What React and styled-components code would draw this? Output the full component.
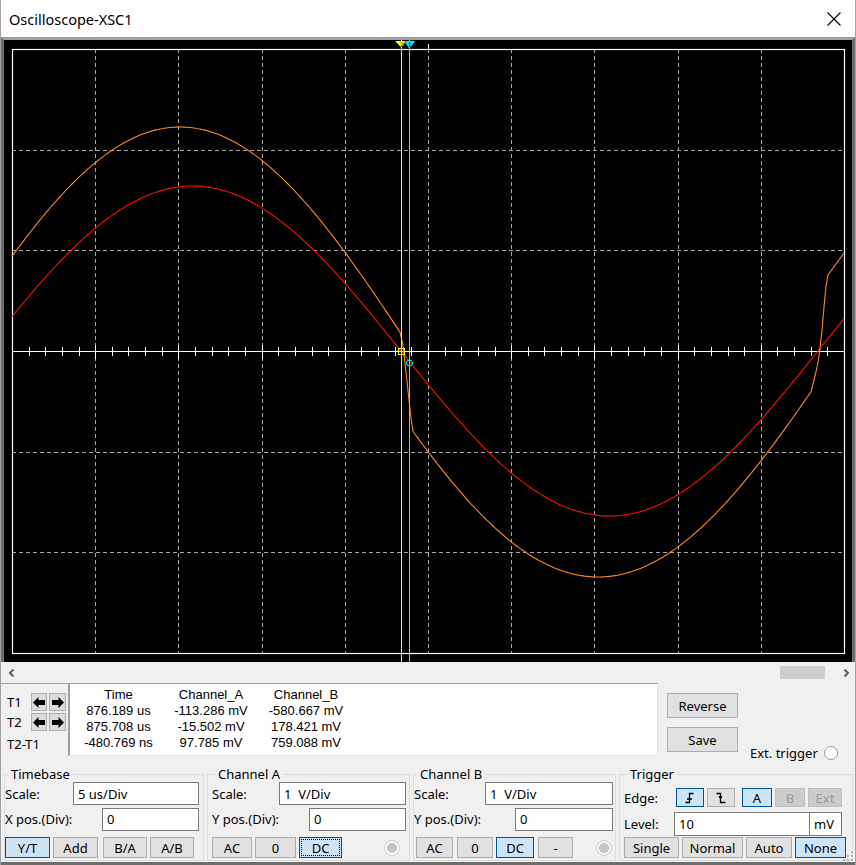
import React from "react";
import styled, { createGlobalStyle } from "styled-components";

const GlobalStyle = createGlobalStyle`
  html, body {
    margin: 0;
    padding: 0;
    background: #f0f0f0;
  }
  body {
    font-family: "Noto Sans", "Segoe UI", sans-serif;
    font-size: 13px;
    color: #000;
  }
`;

const Window = styled.div`
  width: 856px;
  height: 865px;
  box-sizing: border-box;
  background: #f0f0f0;
  border-left: 1px solid #a0a0a0;
  border-right: 1px solid #a0a0a0;
  display: flex;
  flex-direction: column;
  position: relative;
  overflow: hidden;
`;

const TitleBar = styled.div`
  height: 37px;
  flex: none;
  background: #ffffff;
  display: flex;
  align-items: center;
  justify-content: space-between;
  padding: 0 14px 0 8px;
  font-size: 14.5px;
  color: #000;
`;

const ScopeFrame = styled.div`
  flex: none;
  height: 622px;
  background: #000;
  border-top: 3px solid #a0a0a0;
  border-left: 3px solid #6d6d6d;
  border-right: 3px solid #6d6d6d;

  svg {
    display: block;
  }
`;

const ScrollRow = styled.div`
  flex: none;
  height: 21px;
  display: flex;
  align-items: center;
  padding: 0 4px 0 6px;
`;

const Thumb = styled.div`
  width: 45px;
  height: 13px;
  background: #cdcdcd;
  margin-left: auto;
  margin-right: 16px;
`;

const MidRow = styled.div`
  flex: none;
  height: 77px;
  display: flex;
  align-items: flex-start;
`;

const CursorPanel = styled.div`
  width: 67px;
  height: 75px;
  box-sizing: border-box;
  border-top: 1px solid #a0a0a0;
  padding-top: 9px;
  display: flex;
  flex-direction: column;
`;

const CursorRow = styled.div`
  display: flex;
  align-items: center;
  height: 18px;
  margin-top: ${({ $mt }) => $mt || 0}px;
  padding-left: 6px;
`;

const CursorLabel = styled.span`
  width: 24px;
  line-height: 16px;
`;

const ArrowButton = styled.div`
  width: 15px;
  height: 16px;
  margin-right: 2px;
  background: #dcdcdc;
  border: 1px solid #adadad;
  display: flex;
  align-items: center;
  justify-content: center;
`;

const DeltaLabel = styled.div`
  margin-top: 5px;
  padding-left: 6px;
  line-height: 16px;
`;

const Readout = styled.div`
  width: 590px;
  height: 73px;
  box-sizing: border-box;
  background: #ffffff;
  border-top: 1px solid #a0a0a0;
  border-left: 2px solid #a0a0a0;
  border-right: 1px solid #e3e3e3;
  border-bottom: 1px solid #e3e3e3;
  padding-top: 3px;
  display: grid;
  grid-template-columns: 97px 88px 102px;
  grid-auto-rows: 16px;
  font-family: "Liberation Sans", Arial, sans-serif;
  font-size: 13px;
  line-height: 16px;
  text-align: center;
  white-space: nowrap;
`;

const SideArea = styled.div`
  display: flex;
  align-items: flex-start;
  padding: 10px 0 0 9px;
`;

const ButtonColumn = styled.div`
  display: flex;
  flex-direction: column;
  gap: 9px;
`;

const ExtTrigger = styled.div`
  display: flex;
  align-items: center;
  gap: 6px;
  margin: 52px 0 0 12px;
  line-height: 16px;
`;

const RadioCircle = styled.span`
  width: 14px;
  height: 14px;
  box-sizing: border-box;
  border-radius: 50%;
  border: 1px solid #9a9a9a;
  background: #ffffff;
`;

const LedCircle = styled.span`
  width: 16px;
  height: 16px;
  box-sizing: border-box;
  border-radius: 50%;
  border: 1px solid #d0d0d0;
  background: #f7f7f7;
  display: flex;
  align-items: center;
  justify-content: center;
  margin-left: auto;
  margin-right: ${({ $mr }) => $mr || 0}px;

  &::after {
    content: "";
    width: 10px;
    height: 10px;
    border-radius: 50%;
    background: #c6c6c6;
  }
`;

const BottomRow = styled.div`
  flex: none;
  height: 105px;
  box-sizing: border-box;
  border-bottom: 3px solid #6d6d6d;
  padding: 7px 0 0 3px;
  display: flex;
  gap: 3px;
`;

const Group = styled.fieldset`
  width: ${({ $w }) => $w}px;
  height: 94px;
  box-sizing: border-box;
  margin: 0;
  padding: 0 ${({ $pr }) => $pr || 0}px 0 ${({ $pl }) => $pl || 0}px;
  min-width: 0;
  border: 1px solid #dcdcdc;
  display: flex;
  flex-direction: column;
`;

const Legend = styled.legend`
  padding: 0 3px;
  margin-left: 3px;
  line-height: 14px;
  font-size: 13px;
`;

const FieldRow = styled.div`
  display: flex;
  align-items: center;
  height: ${({ $h }) => $h}px;
  margin-top: ${({ $mt }) => $mt || 0}px;
  padding-left: ${({ $pl }) => $pl || 0}px;
  flex: none;
`;

const FieldLabel = styled.span`
  width: ${({ $w }) => ($w ? `${$w}px` : "auto")};
  flex: none;
  white-space: nowrap;
`;

const TextBox = styled.div`
  width: ${({ $w }) => $w}px;
  height: ${({ $h }) => $h || 23}px;
  box-sizing: border-box;
  margin-left: ${({ $auto, $ml }) => ($auto ? "auto" : `${$ml || 0}px`)};
  background: #ffffff;
  border: 1px solid #7a7a7a;
  padding-left: 4px;
  display: flex;
  align-items: center;
  white-space: pre;
  flex: none;
`;

const Button = styled.div`
  width: ${({ $w }) => $w}px;
  height: ${({ $h }) => $h || 21}px;
  margin-right: ${({ $mr }) => ($mr === undefined ? 3 : $mr)}px;
  box-sizing: border-box;
  flex: none;
  display: flex;
  align-items: center;
  justify-content: center;
  background: ${({ $active, $off }) =>
    $active ? "#cce4f7" : $off ? "#cccccc" : "#e1e1e1"};
  border: 1px solid
    ${({ $active, $off }) => ($active ? "#005499" : $off ? "#bfbfbf" : "#adadad")};
  color: ${({ $off }) => ($off ? "#9a9a9a" : "#000")};
  outline: ${({ $focus }) => ($focus ? "1px dotted #000" : "none")};
  outline-offset: -3px;
  line-height: 16px;
`;

const Grip = styled.svg`
  position: absolute;
  right: 2px;
  bottom: 4px;
`;

/* ---------- scope screen ---------- */

const PX0 = 12;
const PX1 = 844;
const PY0 = 49;
const PY1 = 653;
const YC = 351;
const DIVX = (PX1 - PX0) / 10;
const DIVY = (PY1 - PY0) / 6;

function toPath(points) {
  return points
    .map((p, i) => `${i ? "L" : "M"}${p[0].toFixed(1)} ${p[1].toFixed(1)}`)
    .join(" ");
}

const redPoints = [];
for (let x = PX0; x <= PX1; x += 2) {
  redPoints.push([x, YC - 165 * Math.sin((Math.PI * (401 - x)) / 417)]);
}

const orangePoints = [];
for (let x = PX0; x <= 401; x += 2) {
  orangePoints.push([x, YC - 224 * Math.cos((2 * Math.PI * (x - 180)) / 930)]);
}
orangePoints.push([403, 345], [405, 363], [407, 381], [409, 400], [411, 418]);
for (let x = 413; x <= 812; x += 2) {
  orangePoints.push([x, YC + 226 * Math.cos((2 * Math.PI * (x - 598)) / 963)]);
}
orangePoints.push(
  [815, 376],
  [818, 363],
  [820, 348],
  [822, 330],
  [824, 307],
  [826, 286],
  [828, 275],
  [836, 264],
  [844, 253]
);

function ScopeScreen() {
  const vLines = [];
  for (let i = 1; i < 10; i++) vLines.push(Math.round(PX0 + i * DIVX) + 0.5);
  const hLines = [1, 2, 4, 5].map((j) => Math.round(PY0 + j * DIVY) + 0.5);
  const ticks = [];
  for (let i = 0; i <= 50; i++) {
    ticks.push({ x: Math.round(PX0 + (i * DIVX) / 5) + 0.5, major: i % 5 === 0 });
  }

  return (
    <svg width="848" height="622" viewBox="4 40 848 622">
      <g stroke="#a8a8a8" strokeWidth="1" strokeDasharray="4 3" shapeRendering="crispEdges">
        {vLines.map((x) => (
          <line key={`v${x}`} x1={x} y1={PY0} x2={x} y2={PY1} />
        ))}
        {hLines.map((y) => (
          <line key={`h${y}`} x1={PX0} y1={y} x2={PX1} y2={y} />
        ))}
      </g>
      <rect x={PX0 + 0.5} y={PY0 + 0.5} width={PX1 - PX0} height={PY1 - PY0} fill="none" stroke="#fff" strokeWidth="1.2" />
      <g stroke="#fff" strokeWidth="1.3" shapeRendering="crispEdges">
        <line x1={PX0} y1={YC + 0.5} x2={PX1} y2={YC + 0.5} />
        {ticks.map((t) => (
          <line key={t.x} x1={t.x} y1={YC - (t.major ? 6 : 4)} x2={t.x} y2={YC + (t.major ? 8 : 5)} />
        ))}
        <line x1="428.5" y1="44" x2="428.5" y2="49" />
      </g>
      <path d={toPath(redPoints)} fill="none" stroke="#ff1000" strokeWidth="1.1" />
      <path d={toPath(orangePoints)} fill="none" stroke="#ff8a1c" strokeWidth="1.1" />
      <line x1="401.5" y1="40" x2="401.5" y2="662" stroke="#ffff00" strokeWidth="1" />
      <line x1="409.5" y1="40" x2="409.5" y2="662" stroke="#00ffff" strokeWidth="1" />
      <polygon points="395,41 406,41 401.5,48" fill="#ffff00" />
      <polygon points="404,41 415,41 409.5,49" fill="#00e5ff" />
      <polygon points="404,41 406,41 405,43" fill="#ff00ff" />
      <text x="400" y="46.5" fontSize="6" fontFamily="DejaVu Sans, sans-serif" fill="#000">2</text>
      <text x="408" y="46.5" fontSize="6" fontFamily="DejaVu Sans, sans-serif" fill="#000">1</text>
      <rect x="398.5" y="348.5" width="6" height="6" fill="none" stroke="#ffff00" />
      <circle cx="409.5" cy="363" r="3" fill="none" stroke="#00ffff" />
    </svg>
  );
}

/* ---------- small drawings ---------- */

const Chevron = ({ dir }) => (
  <svg width="10" height="10" viewBox="0 0 10 10">
    <path
      d={dir === "left" ? "M6.5 1.5 L3 5 L6.5 8.5" : "M3.5 1.5 L7 5 L3.5 8.5"}
      fill="none"
      stroke="#606060"
      strokeWidth="2"
    />
  </svg>
);

const BigArrow = ({ dir }) => (
  <svg width="12" height="11" viewBox="0 0 12 11">
    <polygon
      points={
        dir === "left"
          ? "0,5.5 5.5,0 5.5,3 12,3 12,8 5.5,8 5.5,11"
          : "12,5.5 6.5,0 6.5,3 0,3 0,8 6.5,8 6.5,11"
      }
      fill="#000"
    />
  </svg>
);

const EdgeIcon = ({ falling }) => (
  <svg width="12" height="12" viewBox="0 0 12 12">
    {falling ? (
      <path d="M1.5 1.5 H5.5 V10.5 H10.5 M4 4.5 L5.5 6 L7 4.5" fill="none" stroke="#000" strokeWidth="1.3" />
    ) : (
      <path d="M1.5 10.5 H5.5 V1.5 H9.5 M3 7 H8" fill="none" stroke="#000" strokeWidth="1.3" />
    )}
  </svg>
);

const CloseIcon = () => (
  <svg width="14" height="14" viewBox="0 0 14 14">
    <path d="M0.5 0.5 L13.5 13.5 M13.5 0.5 L0.5 13.5" stroke="#000" strokeWidth="1.1" />
  </svg>
);

/* ---------- data ---------- */

const readoutRows = [
  ["Time", "Channel_A", "Channel_B"],
  ["876.189 us", "-113.286 mV", "-580.667 mV"],
  ["875.708 us", "-15.502 mV", "178.421 mV"],
  ["-480.769 ns", "97.785 mV", "759.088 mV"],
];

export default function App() {
  return (
    <>
      <GlobalStyle />
      <Window>
        <TitleBar>
          <span>Oscilloscope-XSC1</span>
          <CloseIcon />
        </TitleBar>

        <ScopeFrame>
          <ScopeScreen />
        </ScopeFrame>

        <ScrollRow>
          <Chevron dir="left" />
          <Thumb />
          <Chevron dir="right" />
        </ScrollRow>

        <MidRow>
          <CursorPanel>
            <CursorRow>
              <CursorLabel>T1</CursorLabel>
              <ArrowButton><BigArrow dir="left" /></ArrowButton>
              <ArrowButton><BigArrow dir="right" /></ArrowButton>
            </CursorRow>
            <CursorRow $mt={2}>
              <CursorLabel>T2</CursorLabel>
              <ArrowButton><BigArrow dir="left" /></ArrowButton>
              <ArrowButton><BigArrow dir="right" /></ArrowButton>
            </CursorRow>
            <DeltaLabel>T2-T1</DeltaLabel>
          </CursorPanel>

          <Readout>
            {readoutRows.flat().map((cell, i) => (
              <span key={i}>{cell}</span>
            ))}
          </Readout>

          <SideArea>
            <ButtonColumn>
              <Button $w={71} $h={25} $mr={0}>Reverse</Button>
              <Button $w={71} $h={25} $mr={0}>Save</Button>
            </ButtonColumn>
            <ExtTrigger>
              <span>Ext. trigger</span>
              <RadioCircle />
            </ExtTrigger>
          </SideArea>
        </MidRow>

        <BottomRow>
          <Group $w={200} $pr={4}>
            <Legend>Timebase</Legend>
            <FieldRow $h={25}>
              <FieldLabel>Scale:</FieldLabel>
              <TextBox $w={126} $auto>5 us/Div</TextBox>
            </FieldRow>
            <FieldRow $h={26}>
              <FieldLabel>X pos.(Div):</FieldLabel>
              <TextBox $w={97} $auto>0</TextBox>
            </FieldRow>
            <FieldRow $h={21} $mt={5}>
              <Button $w={45} $active>Y/T</Button>
              <Button $w={45} $mr={5}>Add</Button>
              <Button $w={44}>B/A</Button>
              <Button $w={44}>A/B</Button>
            </FieldRow>
          </Group>

          <Group $w={203} $pl={4} $pr={3}>
            <Legend>Channel A</Legend>
            <FieldRow $h={25}>
              <FieldLabel>Scale:</FieldLabel>
              <TextBox $w={127} $auto>{"1  V/Div"}</TextBox>
            </FieldRow>
            <FieldRow $h={26}>
              <FieldLabel>Y pos.(Div):</FieldLabel>
              <TextBox $w={97} $auto>0</TextBox>
            </FieldRow>
            <FieldRow $h={21} $mt={5}>
              <Button $w={40}>AC</Button>
              <Button $w={41}>0</Button>
              <Button $w={43} $active $focus>DC</Button>
              <LedCircle $mr={6} />
            </FieldRow>
          </Group>

          <Group $w={203} $pl={0} $pr={2}>
            <Legend>Channel B</Legend>
            <FieldRow $h={25}>
              <FieldLabel>Scale:</FieldLabel>
              <TextBox $w={128} $auto>{"1  V/Div"}</TextBox>
            </FieldRow>
            <FieldRow $h={26}>
              <FieldLabel>Y pos.(Div):</FieldLabel>
              <TextBox $w={98} $auto>0</TextBox>
            </FieldRow>
            <FieldRow $h={21} $mt={5} $pl={2}>
              <Button $w={37} $mr={4}>AC</Button>
              <Button $w={36}>0</Button>
              <Button $w={38} $mr={4} $active>DC</Button>
              <Button $w={35}>-</Button>
              <LedCircle $mr={1} />
            </FieldRow>
          </Group>

          <Group $w={234} $pl={4}>
            <Legend>Trigger</Legend>
            <FieldRow $h={19} $mt={7}>
              <FieldLabel $w={52}>Edge:</FieldLabel>
              <Button $w={28} $h={19} $active><EdgeIcon /></Button>
              <Button $w={28} $h={19} $mr={7}><EdgeIcon falling /></Button>
              <Button $w={30} $h={19} $active>A</Button>
              <Button $w={30} $h={19} $off>B</Button>
              <Button $w={34} $h={19} $off>Ext</Button>
            </FieldRow>
            <FieldRow $h={24} $mt={5}>
              <FieldLabel $w={50}>Level:</FieldLabel>
              <TextBox $w={136} $h={24}>10</TextBox>
              <TextBox $w={33} $h={24} $ml={-1}>mV</TextBox>
            </FieldRow>
            <FieldRow $h={21} $mt={1}>
              <Button $w={55}>Single</Button>
              <Button $w={61}>Normal</Button>
              <Button $w={46}>Auto</Button>
              <Button $w={51} $active>None</Button>
            </FieldRow>
          </Group>
        </BottomRow>

        <Grip width="10" height="10" viewBox="0 0 10 10">
          <g fill="#b4b4b4">
            <rect x="8" y="0" width="2" height="2" />
            <rect x="4" y="4" width="2" height="2" />
            <rect x="8" y="4" width="2" height="2" />
            <rect x="0" y="8" width="2" height="2" />
            <rect x="4" y="8" width="2" height="2" />
            <rect x="8" y="8" width="2" height="2" />
          </g>
        </Grip>
      </Window>
    </>
  );
}
